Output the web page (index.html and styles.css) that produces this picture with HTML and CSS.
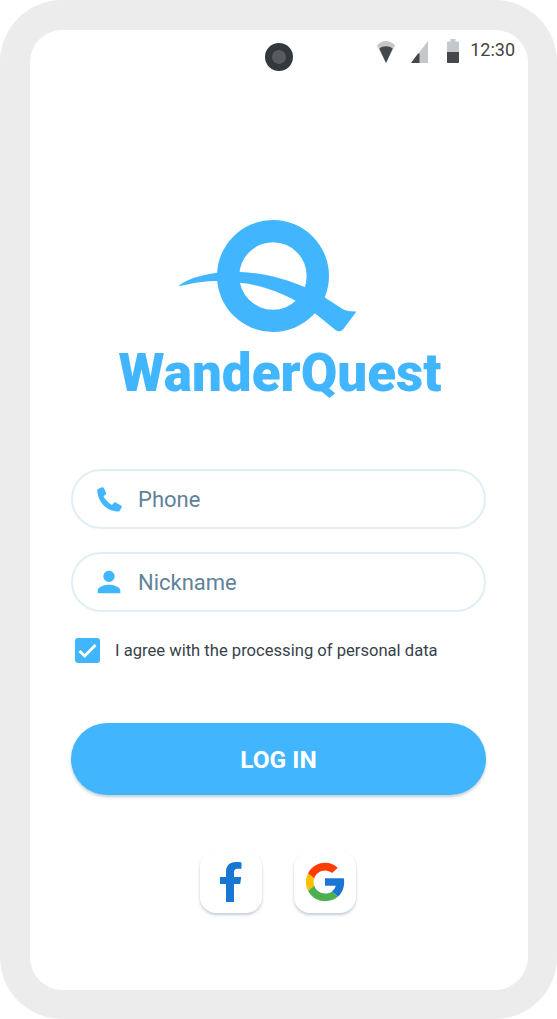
FILE: index.html
```html
<!DOCTYPE html>
<html>
<head>
    <title>WanderQuest</title>
    <link rel="stylesheet" href="styles.css">
</head>
<body>
    <div class="phone">
        <div class="screen">
            <div class="status-bar">
                <div></div>
                <div class="camera"><div class="camera-lens"></div></div>
                <div class="status-icons">
                    <svg class="icon-wifi" width="18" height="22" viewBox="0 0 18 22">
                        <path fill="#c4c8ca" d="M0 4.500C2.500 1.500 5.500 0 9 0s6.500 1.500 9 4.500L9 22z"/>
                        <path fill="#44484b" d="M2.300 7.500C4.200 6 6.400 5.300 9 5.300s4.800.7 6.700 2.200L9 22z"/>
                    </svg>
                    <svg class="icon-signal" width="17" height="22" viewBox="0 0 17 22">
                        <path fill="#c4c8ca" d="M17 0v22H0z"/>
                        <path fill="#44484b" d="M7 12.500h1.500V22H0z"/>
                    </svg>
                    <svg class="icon-battery" width="12" height="24" viewBox="0 0 12 24">
                        <path fill="#c4c8ca" d="M3.500 0h5v2.500H11c.6 0 1 .4 1 1V13H0V3.500c0-.6.4-1 1-1h2.500z"/>
                        <path fill="#44484b" d="M0 13h12v10c0 .6-.4 1-1 1H1c-.6 0-1-.4-1-1z"/>
                    </svg>
                    <span class="status-time">12:30</span>
                </div>
            </div>

            <svg class="logo" width="179" height="112" viewBox="178 220 179 112">
                <path fill="#41b6fe" fill-rule="evenodd" d="M273 220a56 56 0 1 0 0 112a56 56 0 1 0 0-112zM273 242.300a33.700 33.700 0 1 1 0 67.400a33.700 33.700 0 1 1 0-67.400z"/>
                <path fill="#41b6fe" d="M178.300 286.500C184 280 200 275 217 272.700C226 271.600 233 271.700 240 272C265 273 285 279 305 287.300L320 305L296 301C278 291 258 284.500 240 282.800C225 280.800 212 280.500 200 282.300C192 283.300 185 285 178.300 286.500z"/>
                <path fill="#41b6fe" d="M324 297L343 309.300C347 311 351 311.700 356.500 311.500L343 329.500C341 331.700 338 331.700 335.500 330L314 312.500z"/>
            </svg>
            <h1 class="brand">WanderQuest</h1>

            <div class="form">
                <div class="field">
                    <svg class="field-icon" width="25" height="25" viewBox="0 0 25 25"><path d="M1 2L5 .3C5.800 0 6.500 .3 6.800 1L9 5.800C9.300 6.500 9.100 7.200 8.600 7.600L6.500 9.300C8 12.500 11.500 16 15 18L16.900 15.800C17.400 15.300 18.100 15.200 18.700 15.500L24 18.400C24.700 18.800 25 19.400 24.700 20.100L23 23.600C22.700 24.300 22 24.700 21 24.500C9.500 24 1 15.500 .2 3.500C.1 2.800 .4 2.200 1 2z"/></svg>
                    <span class="field-label">Phone</span>
                </div>
                <div class="field">
                    <svg class="field-icon person" width="34" height="34" viewBox="0 0 24 24"><path d="M12 12c2.210 0 4-1.790 4-4s-1.790-4-4-4-4 1.790-4 4 1.790 4 4 4zm0 2c-2.670 0-8 1.340-8 4v2h16v-2c0-2.660-5.330-4-8-4z"/></svg>
                    <span class="field-label">Nickname</span>
                </div>
                <div class="agree">
                    <div class="checkbox">
                        <svg width="25" height="25" viewBox="0 0 25 25"><path fill="none" stroke="#fff" stroke-width="2.800" d="M4.500 13l5.200 5L20.500 7"/></svg>
                    </div>
                    <span>I agree with the processing of personal data</span>
                </div>
                <div class="login-btn">LOG IN</div>
            </div>

            <div class="socials">
                <div class="social-btn">
                    <svg width="24" height="40" viewBox="0 0 24 40"><path fill="#1976d2" d="M7 40V22H1v-7h6V10C7 3.500 11 0 16.500 0c2.500 0 5 .2 6 .4v6.300h-3.700c-3 0-3.800 1.500-3.800 3.800V15h7.200l-1 7H15v18z"/></svg>
                </div>
                <div class="social-btn">
                    <svg width="46" height="46" viewBox="0 0 48 48">
                        <path fill="#ffc107" d="M4 24c0-3.300.8-6.300 2.300-9l6.600 5.100c-.5 1.200-.9 2.500-.9 3.900s.4 2.700.9 3.900l-6.600 5.100C4.800 30.300 4 27.300 4 24z"/>
                        <path fill="#ff3d00" d="M6.300 15C9.600 8.500 16.300 4 24 4c5.100 0 9.700 1.900 13.200 5l-5.700 5.700C29.400 13 26.800 12 24 12c-5.200 0-9.500 3.300-11.100 8.100z"/>
                        <path fill="#4caf50" d="M24 44c-7.700 0-14.400-4.400-17.700-11l6.600-5.100C14.500 32.700 18.800 36 24 36c2.700 0 5.200-.8 7.200-2.200l6.500 5.400C34.200 42.200 29.400 44 24 44z"/>
                        <path fill="#1976d2" d="M43.600 20H24v8h11.300c-.8 2.400-2.200 4.400-4.100 5.800l6.500 5.400C41.700 35.600 44 30.200 44 24c0-1.300-.1-2.700-.4-4z"/>
                    </svg>
                </div>
            </div>
        </div>
    </div>
</body>
</html>
```

FILE: styles.css
```css
:root {
    --blue: #41b6fe;
    --frame: #ececec;
}

body {
    font-family: Roboto, Arial, sans-serif;
    margin: 0;
    padding: 0;
    background-color: white;
}

.phone {
    box-sizing: border-box;
    width: 557px;
    height: 1019px;
    border: 30px solid var(--frame);
    border-right-width: 29px;
    border-bottom-width: 29px;
    border-radius: 62px;
    background-color: white;
}

.screen {
    height: 100%;
}

.status-bar {
    display: grid;
    grid-template-columns: 1fr auto 1fr;
    height: 42px;
}

.camera {
    display: flex;
    align-items: center;
    justify-content: center;
    width: 28px;
    height: 28px;
    margin-top: 13px;
    border-radius: 50%;
    background-color: #33383c;
}

.camera-lens {
    width: 14px;
    height: 14px;
    border-radius: 50%;
    background-color: #565b60;
}

.status-icons {
    display: flex;
    align-items: flex-start;
    justify-content: flex-end;
    padding-right: 13px;
}

.icon-wifi {
    margin-top: 11px;
}

.icon-signal {
    margin-top: 11px;
    margin-left: 16px;
}

.icon-battery {
    margin-top: 9px;
    margin-left: 19px;
}

.status-time {
    margin-left: 11px;
    margin-top: 9px;
    font-size: 18px;
    line-height: 21px;
    color: #444;
}

.logo {
    display: block;
    margin-top: 148px;
    margin-left: 148px;
}

.brand {
    margin: 11px 0 0;
    padding-left: 2px;
    font-size: 53px;
    line-height: 60px;
    font-weight: 900;
    text-align: center;
    color: var(--blue);
}

.form {
    margin: 66px 42px 0 41px;
}

.field {
    box-sizing: border-box;
    display: flex;
    align-items: center;
    height: 60px;
    margin-bottom: 23px;
    padding-left: 24px;
    border: 2px solid #e0eff5;
    border-radius: 30px;
}

.field-icon {
    flex: none;
    fill: var(--blue);
    margin-right: 16px;
}

.field-icon.person {
    margin-left: -5px;
    margin-right: 12px;
}

.field-label {
    font-size: 22px;
    color: #5f8399;
}

.agree {
    display: flex;
    align-items: center;
    gap: 15px;
    margin-top: 26px;
    padding-left: 4px;
    font-size: 16.6px;
    color: #37424a;
}

.checkbox {
    width: 25px;
    height: 25px;
    border-radius: 3px;
    background-color: var(--blue);
}

.login-btn {
    display: flex;
    align-items: center;
    justify-content: center;
    height: 72px;
    margin-top: 60px;
    border-radius: 36px;
    background-color: var(--blue);
    box-shadow: 0 2px 3px rgba(60, 90, 120, 0.3);
    color: white;
    font-size: 24.5px;
    font-weight: 700;
}

.socials {
    display: flex;
    justify-content: center;
    gap: 32px;
    margin-top: 56px;
    padding-right: 2px;
}

.social-btn {
    display: flex;
    align-items: center;
    justify-content: center;
    width: 62px;
    height: 62px;
    border-radius: 16px;
    background-color: white;
    box-shadow: 0 2px 3px rgba(60, 90, 120, 0.3);
}
```
